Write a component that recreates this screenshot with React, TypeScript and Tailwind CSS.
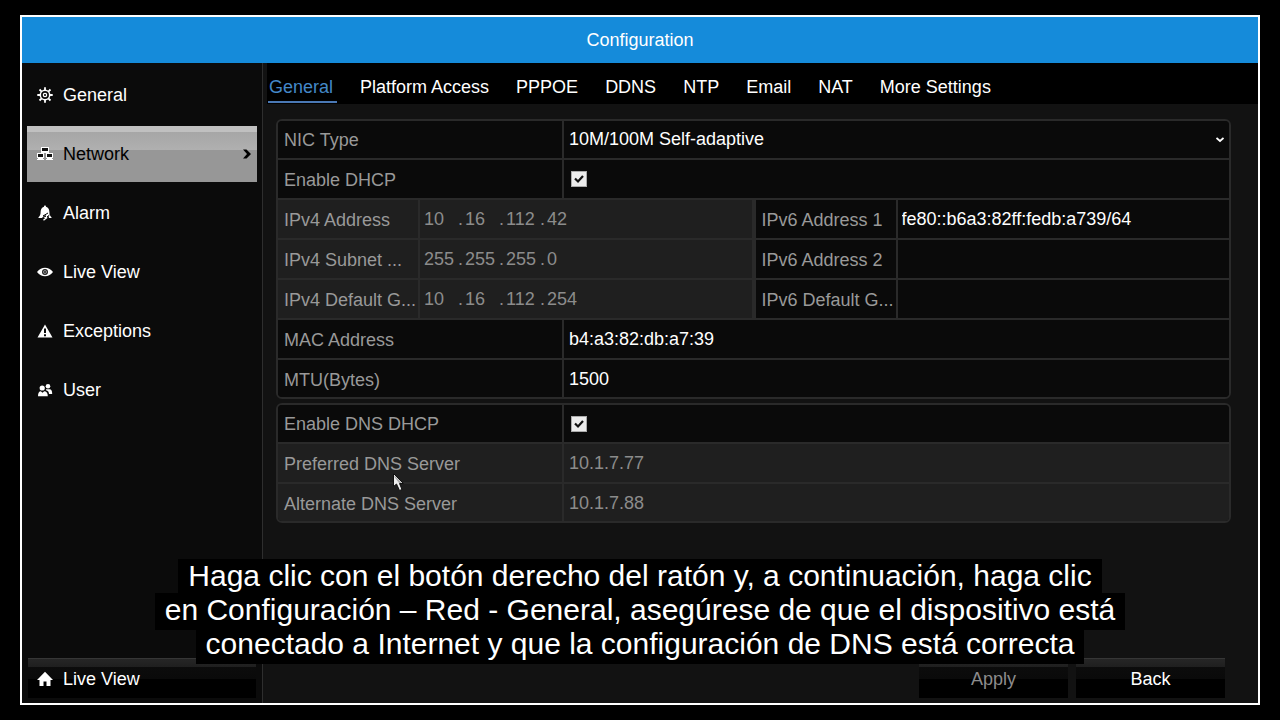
import React from 'react';
import clsx from 'clsx';

type IconProps = { className?: string };

const GearIcon: React.FC<IconProps> = ({ className }) => (
  <svg viewBox="0 0 16 16" className={className} fill="none" stroke="currentColor" aria-hidden="true">
    <circle cx="8" cy="8" r="4.7" strokeWidth="1.5" />
    <circle cx="8" cy="8" r="1.7" strokeWidth="1.2" />
    <path
      d="M8 0.3v3M8 12.7v3M0.3 8h3M12.7 8h3M2.5 2.5l2.2 2.2M11.3 11.3l2.2 2.2M13.5 2.5l-2.2 2.2M4.7 11.3l-2.2 2.2"
      strokeWidth="1.8"
    />
  </svg>
);

const NetworkIcon: React.FC<IconProps> = ({ className }) => (
  <svg viewBox="0 0 16 16" className={className} shapeRendering="crispEdges" aria-hidden="true">
    <g fill="#fff">
      <path d="M4 1h8v6H4z" />
      <path d="M0 7h7v5H0zM1 12h5v2H1z" />
      <path d="M9 7h7v5H9zM10 12h5v2h-5z" />
      <path d="M0 13h7v1H0zM9 13h7v1H9z" />
    </g>
    <g fill="#111">
      <path d="M5 2h6v3H5z" />
      <path d="M1 8h5v3H1z" />
      <path d="M10 8h5v3h-5z" />
    </g>
  </svg>
);

const AlarmIcon: React.FC<IconProps> = ({ className }) => (
  <svg viewBox="0 0 16 16" className={className} aria-hidden="true">
    <path
      fill="currentColor"
      d="M8 0.5C8.7 0.5 9 1 9 1.7C11.4 2.5 12.4 4.5 12.4 7C12.4 9.5 13 11 14.5 12.3V13H1.5V12.3C3 11 3.6 9.5 3.6 7C3.6 4.5 4.6 2.5 7 1.7C7 1 7.3 0.5 8 0.5Z"
    />
    <path fill="none" stroke="#0b0b0b" strokeWidth="1" d="M11 8L6 11H9L4.5 13.5" />
    <path fill="none" stroke="#0b0b0b" strokeWidth="1" d="M12.5 10L10 12H12L8.5 14" />
    <path fill="none" stroke="currentColor" strokeWidth="1.4" d="M10 12.5L6.5 15.3" />
  </svg>
);

const EyeIcon: React.FC<IconProps> = ({ className }) => (
  <svg viewBox="0 0 16 16" className={className} aria-hidden="true">
    <path fill="currentColor" d="M0 8C2.5 4.8 5 3.8 8 3.8S13.5 4.8 16 8C13.5 11.2 11 12.2 8 12.2S2.5 11.2 0 8Z" />
    <circle cx="8" cy="8" r="2.4" fill="#bbb" stroke="#222" strokeWidth="1.2" />
    <circle cx="8" cy="8" r="1" fill="#222" />
  </svg>
);

const WarningIcon: React.FC<IconProps> = ({ className }) => (
  <svg viewBox="0 0 16 16" className={className} aria-hidden="true">
    <path fill="currentColor" d="M8 1.5L15.5 14.5H0.5Z" />
    <path fill="#0b0b0b" d="M7 5.5h2v4.5H7zM7 11.3h2v2H7z" />
  </svg>
);

const UsersIcon: React.FC<IconProps> = ({ className }) => (
  <svg viewBox="0 0 16 16" className={className} fill="currentColor" aria-hidden="true">
    <circle cx="11" cy="4.2" r="2.3" />
    <path d="M9 7.3H12.5C14.5 7.3 15.2 9 15.2 12H12C12 10 11 8.6 9 8.2Z" />
    <circle cx="5.2" cy="6" r="2.6" />
    <path d="M1 14.2C1 10.8 2.2 9.2 3.8 9.2L5.5 10.8L7.2 9.2C9.4 9.2 10.8 10.8 10.8 14.2Z" />
  </svg>
);

const HomeIcon: React.FC<IconProps> = ({ className }) => (
  <svg viewBox="0 0 16 16" className={className} fill="currentColor" aria-hidden="true">
    <path d="M8 0.8L16 9H13.5V15H9.5V10.5H6.5V15H2.5V9H0Z" />
  </svg>
);

const menuItems = [
  { label: 'General', icon: GearIcon },
  { label: 'Network', icon: NetworkIcon },
  { label: 'Alarm', icon: AlarmIcon },
  { label: 'Live View', icon: EyeIcon },
  { label: 'Exceptions', icon: WarningIcon },
  { label: 'User', icon: UsersIcon },
];

const tabs = ['General', 'Platform Access', 'PPPOE', 'DDNS', 'NTP', 'Email', 'NAT', 'More Settings'];

const ipv4Fields = [
  { id: 'ipv4-address', label: 'IPv4 Address', parts: ['10', '16', '112', '42'] },
  { id: 'ipv4-subnet', label: 'IPv4 Subnet ...', parts: ['255', '255', '255', '0'] },
  { id: 'ipv4-gateway', label: 'IPv4 Default G...', parts: ['10', '16', '112', '254'] },
];

const ipv6Fields = [
  { id: 'ipv6-address-1', label: 'IPv6 Address 1', value: 'fe80::b6a3:82ff:fedb:a739/64' },
  { id: 'ipv6-address-2', label: 'IPv6 Address 2', value: '' },
  { id: 'ipv6-gateway', label: 'IPv6 Default G...', value: '' },
];

const glossy =
  'bg-[linear-gradient(to_bottom,#363636_0,#363636_1px,#262626_1px,#1f1f1f_9px,#0c0c0c_9px,#0a0a0a_21px,#000_21px)]';

interface RowProps {
  id: string;
  label: string;
  narrow?: boolean;
  disabled?: boolean;
  last?: boolean;
  first?: boolean;
  children?: React.ReactNode;
}

const Row: React.FC<RowProps> = ({ id, label, narrow, disabled, last, first, children }) => (
  <div
    className={clsx(
      'flex border-[#2a2a2a]',
      last ? 'h-[37px]' : first ? 'h-[39px] border-b-2' : 'h-10 border-b-2',
      disabled ? 'bg-[#1f1f1f]' : 'bg-[#0a0a0a]'
    )}
  >
    <label
      htmlFor={id}
      className={clsx(
        'flex shrink-0 items-center whitespace-nowrap border-r-2 border-[#2a2a2a] pl-1.5 text-[#999]',
        first ? 'pt-0' : 'pt-0.5',
        narrow ? 'w-[142px]' : 'w-[286px]'
      )}
    >
      {label}
    </label>
    <div className={clsx('flex min-w-0 flex-1 items-center', narrow ? 'pl-1' : 'pl-[5px]')}>{children}</div>
  </div>
);

const TextField: React.FC<{ id: string; value: string; disabled?: boolean }> = ({ id, value, disabled }) => (
  <input
    id={id}
    type="text"
    defaultValue={value}
    disabled={disabled}
    className="h-6 w-full bg-transparent text-white outline-none disabled:text-[#8c8c8c]"
  />
);

const CheckBox: React.FC<{ id: string }> = ({ id }) => (
  <span className="relative ml-0.5 size-4">
    <input
      id={id}
      type="checkbox"
      defaultChecked
      className="peer block size-4 appearance-none border border-[#aaa] bg-[#ececec]"
    />
    <svg
      viewBox="0 0 16 16"
      className="pointer-events-none absolute inset-0 hidden size-4 peer-checked:block"
      fill="none"
      stroke="#111"
      strokeWidth="2.2"
      aria-hidden="true"
    >
      <path d="M4 7.5L7 10.5L12 5" />
    </svg>
  </span>
);

const Sidebar: React.FC = () => (
  <aside className="flex w-[241px] shrink-0 flex-col border-r border-[#2e2e2e] bg-[#0b0b0b] px-[5px] pt-1 pb-[5px]">
    <nav className="flex flex-col gap-[3px]">
      {menuItems.map(({ label, icon: Icon }) => {
        const active = label === 'Network';
        return (
          <button
            key={label}
            type="button"
            className={clsx(
              'flex h-14 items-center pl-2.5 pr-1.5 text-left',
              active
                ? 'bg-[linear-gradient(to_bottom,#c0c0c0_0,#c0c0c0_6px,#a6a6a6_6px,#b0b0b0_24px,#979797_24px,#979797_100%)] text-black'
                : 'text-white'
            )}
          >
            <Icon className="mr-2.5 size-4" />
            <span className="flex-1">{label}</span>
            {active && (
              <svg viewBox="0 0 8 10" className="h-2.5 w-2" fill="#000" aria-hidden="true">
                <path d="M0 0.5H3.5L8 5L3.5 9.5H0L4 5Z" />
              </svg>
            )}
          </button>
        );
      })}
    </nav>
    <button
      type="button"
      className={clsx('mx-px mt-auto flex h-10 items-center pt-0.5 pl-[9px] text-left text-white', glossy)}
    >
      <HomeIcon className="mr-2.5 size-4" />
      Live View
    </button>
  </aside>
);

const TabBar: React.FC = () => (
  <nav className="ml-1 flex h-[41px] items-end gap-[22px] bg-black pb-px pl-px">
    {tabs.map((tab) => (
      <button
        key={tab}
        type="button"
        className={clsx(
          'h-[30px] whitespace-nowrap border-b-2 pr-1 pl-px',
          tab === 'General' ? 'border-[#4a78b4] text-[#4488c8]' : 'border-transparent text-white'
        )}
      >
        {tab}
      </button>
    ))}
  </nav>
);

const NetworkForm: React.FC = () => (
  <form className="mt-[15px] mr-[27px] ml-[13px] flex flex-col gap-1">
    <div className="overflow-hidden rounded-md border-2 border-[#2a2a2a]">
      <Row id="nic-type" label="NIC Type" first>
        <div className="relative w-full pb-0.5">
          <select id="nic-type" className="block h-6 w-full appearance-none bg-transparent text-white outline-none">
            <option>10M/100M Self-adaptive</option>
          </select>
          <svg
            viewBox="0 0 8 6"
            className="pointer-events-none absolute top-2.5 right-[5px] h-1.5 w-2"
            fill="none"
            stroke="#fff"
            strokeWidth="1.8"
            aria-hidden="true"
          >
            <path d="M0.5 1L4 4L7.5 1" />
          </svg>
        </div>
      </Row>
      <Row id="enable-dhcp" label="Enable DHCP">
        <CheckBox id="enable-dhcp" />
      </Row>
      <div className="grid grid-cols-2 gap-1 bg-[#2a2a2a]">
        <div>
          {ipv4Fields.map(({ id, label, parts }) => (
            <Row key={id} id={id} label={label} narrow disabled>
              {parts.map((part, index) => (
                <React.Fragment key={index}>
                  {index > 0 && <span className="w-[7px] text-[#8c8c8c]">.</span>}
                  <input
                    id={index === 0 ? id : undefined}
                    aria-label={`${label} ${index + 1}`}
                    type="text"
                    defaultValue={part}
                    disabled
                    className="h-6 w-[34px] bg-transparent text-[#8c8c8c]"
                  />
                </React.Fragment>
              ))}
            </Row>
          ))}
        </div>
        <div>
          {ipv6Fields.map(({ id, label, value }) => (
            <Row key={id} id={id} label={label} narrow>
              <TextField id={id} value={value} />
            </Row>
          ))}
        </div>
      </div>
      <Row id="mac-address" label="MAC Address">
        <TextField id="mac-address" value="b4:a3:82:db:a7:39" />
      </Row>
      <Row id="mtu" label="MTU(Bytes)" last>
        <TextField id="mtu" value="1500" />
      </Row>
    </div>

    <div className="overflow-hidden rounded-md border-2 border-[#2a2a2a]">
      <Row id="enable-dns-dhcp" label="Enable DNS DHCP" first>
        <CheckBox id="enable-dns-dhcp" />
      </Row>
      <Row id="preferred-dns" label="Preferred DNS Server" disabled>
        <TextField id="preferred-dns" value="10.1.7.77" disabled />
      </Row>
      <Row id="alternate-dns" label="Alternate DNS Server" disabled last>
        <TextField id="alternate-dns" value="10.1.7.88" disabled />
      </Row>
    </div>
  </form>
);

const Subtitle: React.FC = () => (
  <p className="pointer-events-none absolute inset-x-0 bottom-[59px] text-center text-[30px] leading-[34px] text-white">
    <span className="bg-black box-decoration-clone px-2.5 pb-1">
      Haga clic con el botón derecho del ratón y, a continuación, haga clic
      <br />
      en Configuración – Red - General, asegúrese de que el dispositivo está
      <br />
      conectado a Internet y que la configuración de DNS está correcta
    </span>
  </p>
);

const Pointer: React.FC = () => (
  <svg viewBox="0 0 11 18" className="pointer-events-none absolute top-[473px] left-[393px] h-[18px] w-[11px]" aria-hidden="true">
    <path d="M0.5 0.5V13.5L3.5 11L6.5 17.5L9 16.5L6.5 10.5H10.5Z" fill="#eee" stroke="#111" />
    <path d="M1.5 2.5L9 10H6L1.5 4Z" fill="#aaa" />
  </svg>
);

export default function App() {
  return (
    <div className="relative flex min-h-screen flex-col bg-black px-5 py-[15px] font-['Liberation_Sans',Arial,sans-serif] text-lg leading-6">
      <div className="flex flex-1 flex-col border-2 border-white bg-[#121212]">
        <header className="flex h-[46px] items-center justify-center bg-[#158bda] text-white">
          <h1>Configuration</h1>
        </header>
        <div className="flex flex-1">
          <Sidebar />
          <main className="flex min-w-0 flex-1 flex-col">
            <TabBar />
            <NetworkForm />
            <footer className="mt-auto mr-[33px] mb-[5px] flex justify-end gap-2 pt-4">
              <button type="button" disabled className={clsx('h-10 w-[149px] pt-0.5 text-[#8c8c8c]', glossy)}>
                Apply
              </button>
              <button type="button" className={clsx('h-10 w-[149px] pt-0.5 text-white', glossy)}>
                Back
              </button>
            </footer>
          </main>
        </div>
      </div>
      <Subtitle />
      <Pointer />
    </div>
  );
}
